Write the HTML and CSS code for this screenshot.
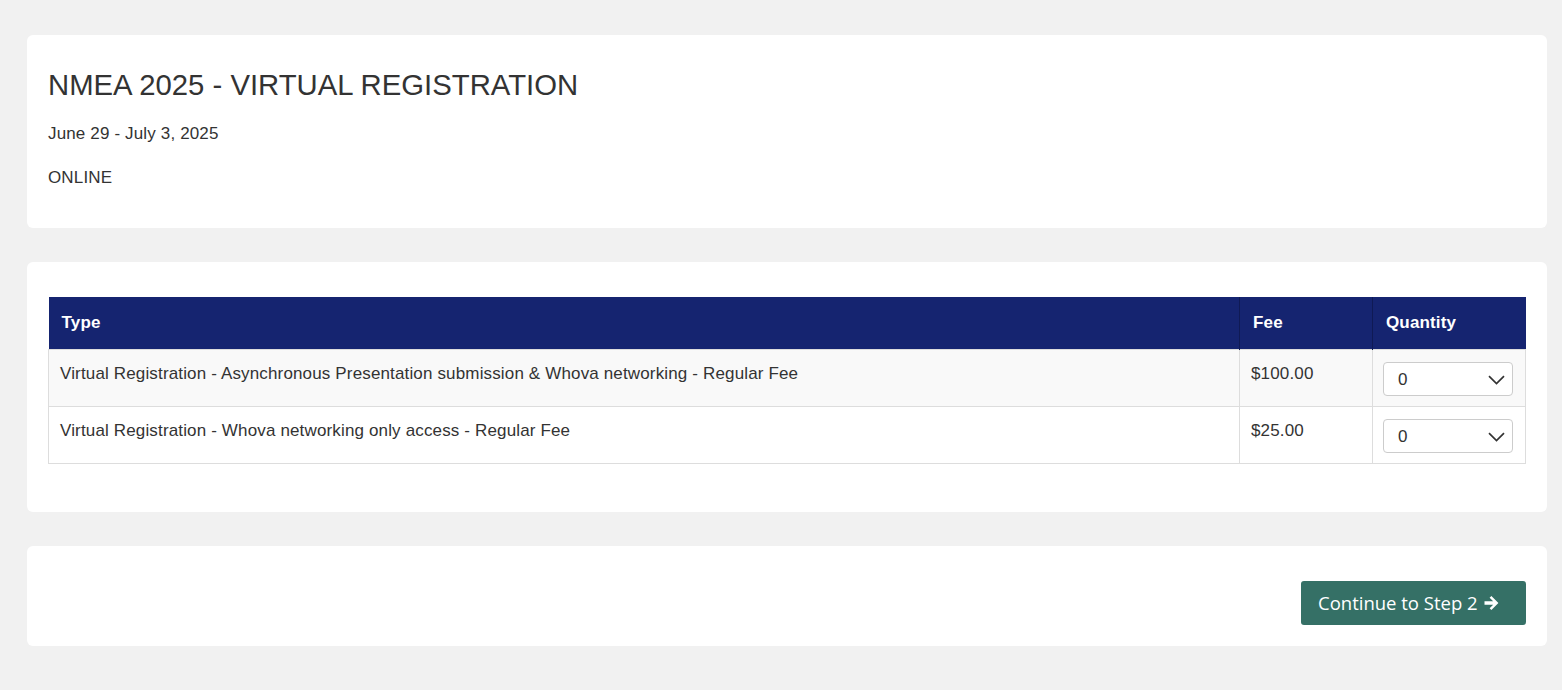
FILE: index.html
```html
<!DOCTYPE html>
<html>
<head>
<meta charset="utf-8">
<link rel="stylesheet" href="styles.css">
</head>
<body>
<div class="page">
  <section class="card card-event">
    <h1 class="title">NMEA 2025 - VIRTUAL REGISTRATION</h1>
    <p class="meta">June 29 - July 3, 2025</p>
    <p class="meta">ONLINE</p>
  </section>
  <section class="card card-table">
    <table class="fees">
      <thead>
        <tr><th class="c-type">Type</th><th class="c-fee">Fee</th><th class="c-qty">Quantity</th></tr>
      </thead>
      <tbody>
        <tr class="odd">
          <td>Virtual Registration - Asynchronous Presentation submission &amp; Whova networking - Regular Fee</td>
          <td>$100.00</td>
          <td><div class="select"><span>0</span><svg width="17" height="10" viewBox="0 0 17 10"><path d="M1 1.2 L8.5 8.5 L16 1.2" fill="none" stroke="#333" stroke-width="1.7"/></svg></div></td>
        </tr>
        <tr>
          <td>Virtual Registration - Whova networking only access - Regular Fee</td>
          <td>$25.00</td>
          <td><div class="select"><span>0</span><svg width="17" height="10" viewBox="0 0 17 10"><path d="M1 1.2 L8.5 8.5 L16 1.2" fill="none" stroke="#333" stroke-width="1.7"/></svg></div></td>
        </tr>
      </tbody>
    </table>
  </section>
  <section class="card card-actions">
    <button class="btn"><span>Continue to Step 2</span><svg width="15" height="14" viewBox="0 0 15 14"><path d="M0.5 5.3 H9.2 L5.6 1.8 L7.4 0 L14.4 7 L7.4 14 L5.6 12.2 L9.2 8.7 H0.5 Z" fill="#fff"/></svg></button>
  </section>
</div>
</body>
</html>
```
FILE: styles.css
```css
html, body { margin: 0; padding: 0; }
body {
  background: #f1f1f1;
  font-family: "Liberation Sans", Arial, sans-serif;
  color: #333;
}
.page {
  padding: 35px 15px 44px 27px;
  display: flex;
  flex-direction: column;
  gap: 34px;
}
.card {
  background: #fff;
  border-radius: 6px;
}
.card-event {
  padding: 33px 21px 22px;
  height: 138px;
}
.title {
  margin: 0 0 22px;
  font-size: 29.3px;
  font-weight: 400;
  line-height: 34px;
}
.meta {
  margin: 0 0 24px;
  font-size: 17px;
  letter-spacing: 0.15px;
  line-height: 20px;
}
.card-table {
  padding: 35px 21px 48px;
}
.fees {
  width: 100%;
  border-collapse: collapse;
  font-size: 17px;
  letter-spacing: 0.15px;
}
.fees th {
  background: #152470;
  color: #fff;
  text-align: left;
  font-weight: 700;
  height: 52px;
  padding: 16px 13px 0;
  box-sizing: border-box;
  vertical-align: top;
  border-left: 1px solid #0f1a55;
  line-height: 20px;
}
.fees th:first-child { border-left: none; }
.c-fee { width: 133px; }
.c-qty { width: 153px; }
.fees td {
  border: 1px solid #ddd;
  padding: 14px 11px 0;
  height: 57px;
  box-sizing: border-box;
  vertical-align: top;
  line-height: 20px;
}
.fees tr.odd td { background: #f9f9f9; }
.select {
  margin-top: -2px;
  margin-left: -1px;
  width: 130px;
  height: 34px;
  box-sizing: border-box;
  border: 1px solid #ccc;
  border-radius: 4px;
  background: #fff;
  display: flex;
  align-items: center;
  justify-content: space-between;
  padding: 2px 7px 0 14px;
}
.card-actions {
  display: flex;
  justify-content: flex-end;
  padding: 35px 21px 21px;
}
.btn {
  background: #357066;
  color: #fff;
  border: none;
  border-radius: 3px;
  height: 44px;
  width: 225px;
  font-family: "Open Sans", sans-serif;
  font-size: 18.5px;
  display: flex;
  align-items: center;
  justify-content: flex-start;
  gap: 6px;
  padding: 0 0 0 17px;
}
```
